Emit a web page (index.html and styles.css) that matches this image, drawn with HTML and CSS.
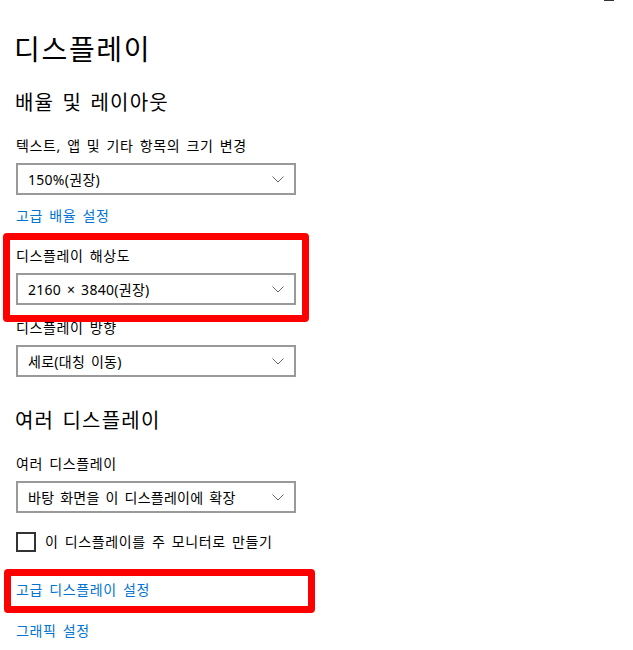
FILE: index.html
```html
<!DOCTYPE html>
<html lang="ko">
<head>
<meta charset="utf-8">
<link rel="stylesheet" href="styles.css">
</head>
<body>
<div class="edge-mark"></div>
<main class="page">
  <h1 class="title">디스플레이</h1>
  <h2 class="section">배율 및 레이아웃</h2>

  <div class="field field-1">
    <div class="label">텍스트, 앱 및 기타 항목의 크기 변경</div>
    <div class="select"><span>150%(권장)</span><svg class="chev" width="12" height="7" viewBox="0 0 12 7"><path d="M0.5 0.5 L6 6 L11.5 0.5" fill="none" stroke="#666" stroke-width="1"/></svg></div>
  </div>
  <a class="link link-first">고급 배율 설정</a>

  <div class="field highlighted hl-1">
    <div class="label">디스플레이 해상도</div>
    <div class="select"><span>2160 × 3840(권장)</span><svg class="chev" width="12" height="7" viewBox="0 0 12 7"><path d="M0.5 0.5 L6 6 L11.5 0.5" fill="none" stroke="#666" stroke-width="1"/></svg></div>
  </div>

  <div class="field field-3">
    <div class="label">디스플레이 방향</div>
    <div class="select"><span>세로(대칭 이동)</span><svg class="chev" width="12" height="7" viewBox="0 0 12 7"><path d="M0.5 0.5 L6 6 L11.5 0.5" fill="none" stroke="#666" stroke-width="1"/></svg></div>
  </div>

  <h2 class="section section-2">여러 디스플레이</h2>
  <div class="field field-4">
    <div class="label">여러 디스플레이</div>
    <div class="select"><span>바탕 화면을 이 디스플레이에 확장</span><svg class="chev" width="12" height="7" viewBox="0 0 12 7"><path d="M0.5 0.5 L6 6 L11.5 0.5" fill="none" stroke="#666" stroke-width="1"/></svg></div>
  </div>

  <label class="check"><span class="box"></span><span>이 디스플레이를 주 모니터로 만들기</span></label>

  <div class="highlighted hl-2"><a class="link">고급 디스플레이 설정</a></div>
  <a class="link link-last">그래픽 설정</a>
</main>
</body>
</html>
```

FILE: styles.css
```css
html, body {
  margin: 0;
  padding: 0;
  background: #ffffff;
}
body {
  font-family: "Noto Sans", "Noto Sans CJK KR", sans-serif;
  color: #000000;
  position: relative;
  width: 633px;
  height: 650px;
  overflow: hidden;
  letter-spacing: 0.04em;
  word-spacing: 0.12em;
}
.edge-mark {
  position: absolute;
  top: 0;
  left: 604px;
  width: 10px;
  height: 1px;
  background: #333;
}
.page {
  padding: 33px 0 0 16px;
  display: flex;
  flex-direction: column;
  align-items: flex-start;
}
.title {
  margin: 0 0 0 -2px;
  font-size: 28px;
  font-weight: 400;
  line-height: 32px;
  letter-spacing: 0.06em;
}
.section {
  margin: 26px 0 0 -1px;
  font-size: 20px;
  font-weight: 400;
  line-height: 24px;
  letter-spacing: 0.06em;
}
.section-2 {
  margin-top: 32px;
}
.field {
  display: flex;
  flex-direction: column;
}
.field-1 {
  margin-top: 21px;
}
.field-3 {
  margin-top: 13px;
}
.field-4 {
  margin-top: 21px;
}
.label {
  font-size: 14px;
  line-height: 20px;
  height: 20px;
}
.select {
  margin-top: 7px;
  box-sizing: border-box;
  width: 280px;
  height: 32px;
  border: 2px solid #999999;
  display: flex;
  align-items: center;
  justify-content: space-between;
  padding: 0 10px 0 10px;
  font-size: 14px;
  letter-spacing: 0.02em;
}
.chev {
  display: block;
}
.link {
  display: block;
  font-size: 14px;
  line-height: 20px;
  color: #0074d4;
  text-decoration: none;
}
.link-first {
  margin-top: 11px;
}
.highlighted {
  position: relative;
}
.highlighted::after {
  content: "";
  position: absolute;
  border: 7px solid #ff0000;
  border-radius: 4px;
  pointer-events: none;
}
.hl-1 {
  margin-top: 20px;
}
.hl-1::after {
  left: -13px;
  right: -13px;
  top: -13px;
  bottom: -17px;
}
.check {
  display: flex;
  align-items: center;
  gap: 9px;
  margin-top: 19px;
  font-size: 14px;
  line-height: 20px;
}
.box {
  box-sizing: border-box;
  width: 20px;
  height: 20px;
  border: 2px solid #333333;
}
.hl-2 {
  margin-top: 28px;
  width: 280px;
}
.hl-2::after {
  left: -12px;
  right: -19px;
  top: -11px;
  bottom: -13px;
}
.link-last {
  margin-top: 21px;
}
```
